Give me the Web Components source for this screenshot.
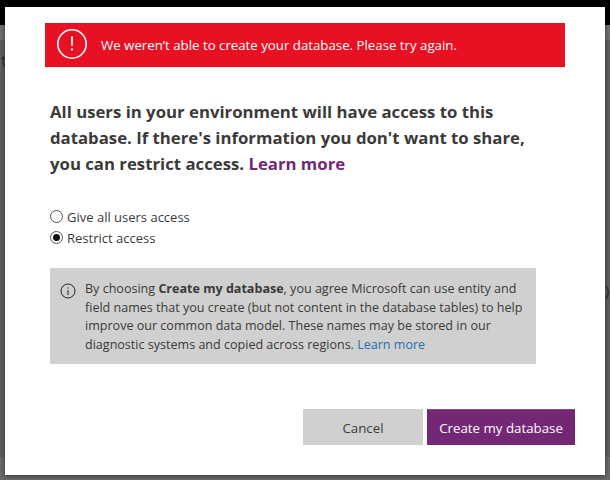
<!DOCTYPE html>
<html><head><meta charset="utf-8">
<style>
html,body{margin:0;padding:0;width:610px;height:480px;overflow:hidden;background:#6b6b6b;font-family:"Open Sans","Noto Sans",sans-serif;}
</style></head><body>
<template id="t-backdrop"><style>
:host{display:flex;flex-direction:column;width:610px;height:480px;position:relative;overflow:hidden;background:#5f5f5f}
.top{height:25px;background:#000;flex:none}
.band{height:15px;background:#707070;flex:none}
.page{flex:1;display:flex;flex-direction:column;font-size:15px;line-height:20px;color:#2a2a2a}
.l{margin:10px 0 0 1px}
.r{margin:210px 0 0 605px;width:5px;overflow:hidden}
.foot{height:23px;background:#6a6a6a;flex:none}
::slotted(*){position:absolute;left:5px;top:7px}
</style><div class="top"></div><div class="band"></div><div class="page"><div class="l">t</div><div class="r">)</div></div><div class="foot"></div><slot></slot></template>
<template id="t-dialog"><style>
:host{display:flex;flex-direction:column;width:600px;height:468px;background:#fff;padding:16px 40px 0 40px;box-sizing:border-box;box-shadow:0 1px 5px rgba(0,0,0,.5);color:#3b3a39}
</style><slot></slot></template>
<template id="t-banner"><style>
:host{display:flex;align-items:center;height:44px;width:520px;background:#e81123;color:#fff;font-size:13.25px;gap:13px;padding-left:11px;box-sizing:border-box;flex:none}
svg{flex:none;margin-top:-2px}
</style><svg width="32" height="32" viewBox="0 0 32 32"><circle cx="16" cy="16" r="14.2" fill="none" stroke="#fff" stroke-width="1.6"/><path d="M15 8.5h2l-.3 9.5h-1.4z" fill="#fff"/><rect x="15.1" y="20.4" width="1.8" height="2.2" fill="#fff"/></svg><span><slot></slot></span></template>
<template id="t-radio"><style>
:host{display:flex;align-items:center;height:21px;font-size:13px;gap:4px;color:#3b3a39}
.r{width:11px;height:11px;border:1px solid #555;border-radius:50%;background:#fff;display:flex;align-items:center;justify-content:center;flex:none}
:host([checked]) .d{width:7px;height:7px;border-radius:50%;background:#111}
</style><span class="r"><span class="d"></span></span><span><slot></slot></span></template>
<template id="t-note"><style>
:host{display:flex;background:#d0d0d0;width:486px;height:96px;box-sizing:border-box;padding:12px 10px 0 10px;gap:9px;font-size:12.55px;line-height:18.6px;color:#3b3a39;flex:none;white-space:nowrap}
svg{flex:none;margin-top:3px}
</style><svg width="16" height="16" viewBox="0 0 16 16"><circle cx="8" cy="8" r="7" fill="none" stroke="#222" stroke-width="1"/><rect x="7.5" y="7" width="1" height="5" fill="#222"/><rect x="7.5" y="4.4" width="1" height="1.2" fill="#222"/></svg><div><slot></slot></div></template>
<template id="t-btn"><style>
:host{display:flex;align-items:center;justify-content:center;height:36px;padding-top:1px;font-size:13.3px;box-sizing:border-box;background:#d0d0d0;color:#3b3a39;width:120px}
:host([primary]){background:#742774;color:#fff;width:148px;box-shadow:inset 0 1px 0 #8a4a8a}
</style><slot></slot></template>
<x-backdrop>
<x-dialog>
<x-banner>We weren’t able to create your database. Please try again.</x-banner>
<div style="margin:0 0 0 5px">
<div style="font-size:16.75px;font-weight:700;line-height:26px;margin-top:32px;color:#3b3a39">All users in your environment will have access to this<br>database. If there's information you don't want to share,<br>you can restrict access. <span style="color:#742774">Learn more</span></div>
<div style="margin-top:29px"><x-radio>Give all users access</x-radio><x-radio checked>Restrict access</x-radio></div>
<x-note style="margin-top:20px">By choosing <b>Create my database</b>, you agree Microsoft can use entity and<br>field names that you create (but not content in the database tables) to help<br>improve our common data model. These names may be stored in our<br>diagnostic systems and copied across regions. <span style="color:#1e6fb0">Learn more</span></x-note>
</div>
<div style="display:flex;justify-content:flex-end;gap:4px;margin-top:45px;width:530px"><x-btn>Cancel</x-btn><x-btn primary>Create my database</x-btn></div>
</x-dialog>
</x-backdrop>
<script>
for(const n of ['backdrop','dialog','banner','radio','note','btn']){
customElements.define('x-'+n,class extends HTMLElement{constructor(){super();this.attachShadow({mode:'open'}).appendChild(document.getElementById('t-'+n).content.cloneNode(true));}});
}
</script>
</body></html>
